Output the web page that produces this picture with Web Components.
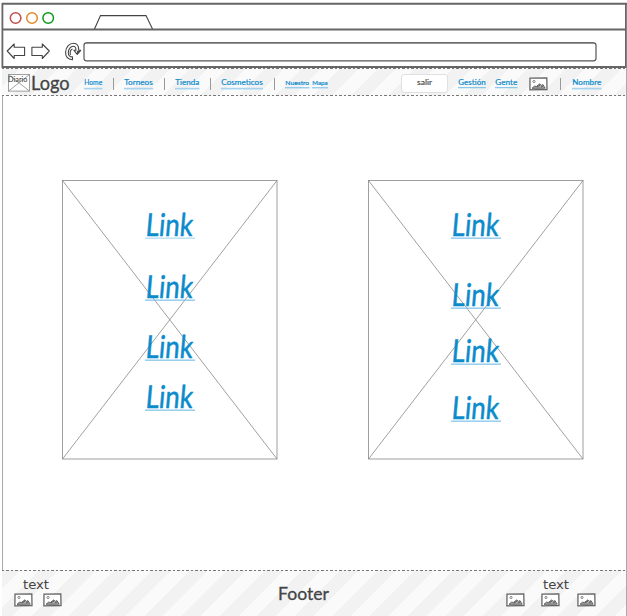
<!DOCTYPE html>
<html lang="es"><head><meta charset="utf-8"><title>Wireframe</title>
<style>
html,body{margin:0;height:616px;overflow:hidden;background:#fff}
body{font-family:Lato,"Open Sans",sans-serif;color:#444}
</style></head><body>
<wf-page></wf-page>
<script>
class Base extends HTMLElement{
  connectedCallback(){
    this.attachShadow({mode:'open'}).innerHTML=this.render();
  }
  a(n,d){return this.hasAttribute(n)?this.getAttribute(n):d}
}
/* Label fitted to a given width: w, h box; size; base = baseline; x = offset before it in the row */
customElements.define('wf-label',class extends Base{
  render(){
    const w=+this.a('w'),h=+this.a('h'),s=this.a('size',8),b=this.a('base'),u=this.a('line',''),uh=+this.a('lh',1),uc=this.a('lc','#a6d3ee');
    const p=+this.a('pad',0);
    return `<style>:host{display:block;flex:none;width:${w}px;height:${h}px;margin-left:${this.a('x',0)}px;margin-top:${this.a('y',0)}px;color:${this.a('color','#444')}}
    svg{display:block;overflow:visible}text{fill:currentColor;stroke:currentColor;stroke-width:${this.a('ink',0)}px;stroke-linejoin:round;font-family:${this.a('font','Lato')},sans-serif;font-weight:400}</style>
    <svg width="${w}" height="${h}"><text x="${p}" y="${b}" font-size="${s}" textLength="${w-2*p}" lengthAdjust="spacingAndGlyphs" transform="${this.a('skew')?`translate(${b*.07-1} 0) skewX(-5)`:''}">${this.textContent}</text>
    ${u?`<rect x="0" y="${u}" width="${w}" height="${uh}" fill="${uc}"/>`:''}</svg>`;
  }
});
customElements.define('wf-sep',class extends Base{
  render(){return `<style>:host{display:block;flex:none;width:1px;height:12px;margin:9px 0 0 ${this.a('x')}px;background:#999}</style>`}
});
customElements.define('wf-photo',class extends Base{
  render(){return `<style>:host{display:block;flex:none;width:19px;height:14px;margin-left:${this.a('x',0)}px;margin-top:${this.a('y',0)}px}svg{display:block}</style>
  <svg width="19" height="14" viewBox="0 0 19 14" fill="none"><path d="M1 1.2 17.8 .9 18 12.5 .9 12.8Z" fill="#fff" stroke="#666" stroke-width="1.3"/><circle cx="5" cy="4.5" r="1.1" stroke="#777" stroke-width=".9"/><path d="M3 11.3 5.6 9.1 7.2 9.6 11 6.8 12.7 8.5 13.9 7.5 16.2 11.2Z" fill="#aaa" stroke="#555" stroke-width=".9"/><path d="m8 10 3-2m1 2 2-1" stroke="#444" stroke-width=".8"/></svg>`}
});
customElements.define('wf-browser',class extends Base{
  render(){return `<style>:host{display:block;height:66px;padding-top:2px}svg{display:block}</style>
  <svg width="627" height="66" viewBox="0 2 627 66" fill="none" stroke="#666">
   <path d="M2 3.8H627" stroke-width="2"/><path d="M2.4 3V68M625.9 3V68" stroke-width="1.8"/><path d="M2 29.6H626M2 67H626" stroke-width="2"/>
   <path d="m94.5 29 6-13.4H146l6.5 13.4" stroke="#444" stroke-width="1.1"/>
   <circle cx="15.6" cy="18" r="5.3" stroke="#c0504d" stroke-width="1.5"/><circle cx="32" cy="18" r="5.3" stroke="#e08a28" stroke-width="1.5"/><circle cx="48.2" cy="18" r="5.3" stroke="#0a9a18" stroke-width="1.5"/>
   <g stroke="#444" stroke-width="1.1" stroke-linejoin="round"><path d="m7.2 51 7-7v3.3h10.4v8.2H14.2v3Z"/><path d="m49.3 51-7-7v3.3H31.9v8.2h10.4v3Z"/>
   <path d="M72.5 59.7C67.5 59.5 65.3 56.2 65.6 52 66 46.8 69.5 43.3 73.5 43.3c3.6 0 5.3 3 5.3 7h1.9l-3.5 4.1-3.2-4.1h2c0-2.5-.8-4-2.8-4-2.5 0-4.8 2.9-4.9 6.2-.1 2.9 1.6 4.5 4.2 4.4Z"/><path d="M70.5 55c-.8-3 .2-5.3 2-6"/></g>
   <path d="m77 50.8 3.6-.1-3.4 3.6Z" fill="#444" stroke="none"/>
   <rect x="84" y="42.8" width="512" height="18" rx="2.5" fill="#fff" stroke="#555" stroke-width="1.2"/><path d="M86 42.8H594" stroke="#666"/>
  </svg>`}
});
customElements.define('wf-band',class extends Base{
  render(){
    const dots='repeating-linear-gradient(90deg,#777 0 2.2px,#fff0 2.2px 4.5px)';
    return `<style>:host{display:flex;align-items:flex-start;box-sizing:border-box;height:${this.a('h')}px;padding:1px 0;
   background:${dots} 0 0/100% 1px no-repeat,${this.a('open')?'':dots+' 0 100%/100% 1px no-repeat,'}repeating-linear-gradient(135deg,#f2f2f2 0 13.3px,#fafafa 13.3px 26.6px)}
   .row{display:flex;align-items:flex-start;width:100%}</style><div class="row"><slot></slot></div>`}
});
customElements.define('wf-logo',class extends Base{
  render(){return `<style>:host{display:block;flex:none;width:22px;height:18px;margin:5px 0 0 6px}svg{display:block;overflow:visible}text{font:7.5px Lato,sans-serif;fill:#333}</style>
  <svg width="22" height="18" fill="none" stroke="#888" stroke-width=".8"><rect x=".5" y=".5" width="21" height="16.6" fill="#fff"/><path d="m.5.5 21 16.6m0-16.6-21 16.6"/><text x="0" y="7.8" textLength="19.5" lengthAdjust="spacingAndGlyphs" stroke="none">Diario</text></svg>`}
});
customElements.define('wf-button',class extends Base{
  render(){return `<style>:host{display:flex;flex:none;box-sizing:border-box;justify-content:center;width:47px;height:19px;margin:5px 0 0 72.5px;background:#fff;border:1px solid #e0e0e0;border-radius:3px}</style><slot></slot>`}
});
customElements.define('wf-card',class extends Base{
  render(){return `<style>:host{display:flex;flex-direction:column;flex:none;align-items:center;box-sizing:border-box;width:216px;height:280px;background:url("data:image/svg+xml,%3Csvg xmlns='http://www.w3.org/2000/svg' width='216' height='280'%3E%3Cg fill='none' stroke='%23888' stroke-width='.8'%3E%3Crect x='.5' y='.5' width='214.5' height='278.5'/%3E%3Cpath d='M.5.5 215 279M215 .5.5 279'/%3E%3C/g%3E%3C/svg%3E")}</style><slot></slot>`}
});
customElements.define('wf-page',class extends Base{
  render(){
    const nav=(t,w,x,lh=1.6,line=18.8,size=7.8,lc='#a6d3ee')=>`<wf-label color="#0b8bcc" w="${w}" h="24" x="${x}" base="16.3" size="${size}" ink=".2" pad=".3" line="${line}" lh="${lh}" lc="${lc}">${t}</wf-label>`;
    const link=(y,c)=>`<wf-label color="#0b8bcc" w="50" h="28" y="${y}" base="24.8" size="31.5" ink=".6" pad="1.5" skew="1" line="26.6" lh="1.1" lc="${c||'#6fbce6'}">Link</wf-label>`;
    return `<style>:host{display:flex;flex-direction:column;height:616px;width:627px;overflow:hidden}
    main{display:flex;flex:1;box-sizing:border-box;margin:0 0 0 2px;padding:84px 0 0 60px;gap:90px}
    .frame{display:flex;flex-direction:column;flex:1;border-left:1px solid #aaa;border-right:1px solid #aaa;margin:0 0 0 2px}
    .frame>*{margin-left:-1px;margin-right:0}.fcol{display:flex;flex-direction:column;flex:none}.icons{display:flex}</style>
    <wf-browser></wf-browser><div class="frame">
    <wf-band h="28"><wf-logo></wf-logo><wf-label w="38.5" h="26" x=".5" base="21" size="19" ink=".3">Logo</wf-label>
    ${nav('Home',18.5,15)}<wf-sep x="10.5"></wf-sep>${nav('Torneos',29,10)}<wf-sep x="10.5"></wf-sep>${nav('Tienda',24.5,10.5)}<wf-sep x="10"></wf-sep>${nav('Cosmeticos',42,10.5)}<wf-sep x="10.5"></wf-sep>${nav('Nuestro',24.5,10.5,1,18.3,6.5,'#6fbce6')}${nav('Mapa',16,2.5,1,18.3,6.5,'#6fbce6')}
    <wf-button><wf-label w="15" h="16" base="10" size="7.5" ink=".15">salir</wf-label></wf-button>
    ${nav('Gestión',28,10.5,1,18.2,7.8,'#6fbce6')}${nav('Gente',22.5,9,1,18.2,7.8,'#6fbce6')}<wf-photo x="11" y="8"></wf-photo><wf-sep x="12.5"></wf-sep>${nav('Nombre',29.5,10.5)}</wf-band>
    <main><wf-card>${link(31,'#a6d8f0')}${link(34)}${link(32)}${link(22)}</wf-card><wf-card>${link(31)}${link(42)}${link(28)}${link(29)}</wf-card></main>
    <wf-band h="46" open="1"><div class="fcol" style="width:63px"><wf-label w="26" h="16" x="20.5" y="5" base="12.6" size="12.5" font="DejaVu Sans">text</wf-label><div class="icons"><wf-photo x="11.5" y="1"></wf-photo><wf-photo x="10" y="1"></wf-photo></div></div>
    <wf-label w="51" h="30" x="212.5" y="9" base="20" size="18" ink=".3">Footer</wf-label>
    <div class="fcol"><wf-label w="26" h="16" x="214.5" y="5" base="12.6" size="12.5" font="DejaVu Sans">text</wf-label><div class="icons"><wf-photo x="177" y="1"></wf-photo><wf-photo x="16" y="1"></wf-photo><wf-photo x="17" y="1"></wf-photo></div></div></wf-band></div>`;
  }
});
</script></body></html>
